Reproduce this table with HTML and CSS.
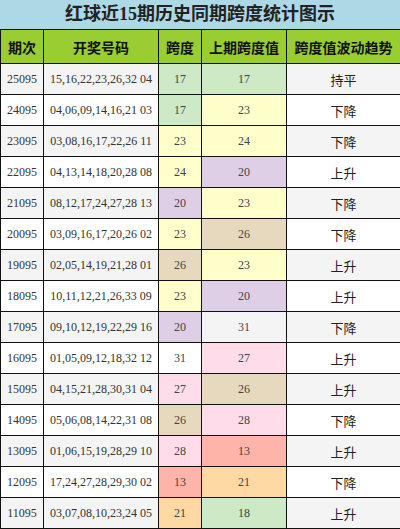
FILE: index.html
```html
<!DOCTYPE html>
<html lang="zh-CN">

<head>
    <meta charset="UTF-8">
    <meta name="viewport" content="width=device-width, initial-scale=1.0">
    <title>红球近15期历史同期跨度统计图示</title>
    <link rel="stylesheet" href="styles.css">
</head>

<body>
    <div class="chart">
        <div class="chart-title">红球近15期历史同期跨度统计图示</div>
        <table class="span-table">
            <colgroup>
                <col class="col-issue">
                <col class="col-nums">
                <col class="col-span">
                <col class="col-prev">
                <col class="col-trend">
            </colgroup>
            <thead>
                <tr>
                    <th>期次</th>
                    <th>开奖号码</th>
                    <th>跨度</th>
                    <th>上期跨度值</th>
                    <th>跨度值波动趋势</th>
                </tr>
            </thead>
            <tbody id="rows">
                <tr><td>25095</td><td>15,16,22,23,26,32 04</td><td class="num c-green">17</td><td class="num c-green">17</td><td class="trend">持平</td></tr>
                <tr><td>24095</td><td>04,06,09,14,16,21 03</td><td class="num c-green">17</td><td class="num c-yellow">23</td><td class="trend">下降</td></tr>
                <tr><td>23095</td><td>03,08,16,17,22,26 11</td><td class="num c-yellow">23</td><td class="num c-yellow">24</td><td class="trend">下降</td></tr>
                <tr><td>22095</td><td>04,13,14,18,20,28 08</td><td class="num c-yellow">24</td><td class="num c-purple">20</td><td class="trend">上升</td></tr>
                <tr><td>21095</td><td>08,12,17,24,27,28 13</td><td class="num c-purple">20</td><td class="num c-yellow">23</td><td class="trend">下降</td></tr>
                <tr><td>20095</td><td>03,09,16,17,20,26 02</td><td class="num c-yellow">23</td><td class="num c-tan">26</td><td class="trend">下降</td></tr>
                <tr><td>19095</td><td>02,05,14,19,21,28 01</td><td class="num c-tan">26</td><td class="num c-yellow">23</td><td class="trend">上升</td></tr>
                <tr><td>18095</td><td>10,11,12,21,26,33 09</td><td class="num c-yellow">23</td><td class="num c-purple">20</td><td class="trend">上升</td></tr>
                <tr><td>17095</td><td>09,10,12,19,22,29 16</td><td class="num c-purple">20</td><td class="num">31</td><td class="trend">下降</td></tr>
                <tr><td>16095</td><td>01,05,09,12,18,32 12</td><td class="num">31</td><td class="num c-pink">27</td><td class="trend">上升</td></tr>
                <tr><td>15095</td><td>04,15,21,28,30,31 04</td><td class="num c-pink">27</td><td class="num c-tan">26</td><td class="trend">上升</td></tr>
                <tr><td>14095</td><td>05,06,08,14,22,31 08</td><td class="num c-tan">26</td><td class="num c-pink">28</td><td class="trend">下降</td></tr>
                <tr><td>13095</td><td>01,06,15,19,28,29 10</td><td class="num c-pink">28</td><td class="num c-red">13</td><td class="trend">上升</td></tr>
                <tr><td>12095</td><td>17,24,27,28,29,30 02</td><td class="num c-red">13</td><td class="num c-orange">21</td><td class="trend">下降</td></tr>
                <tr><td>11095</td><td>03,07,08,10,23,24 05</td><td class="num c-orange">21</td><td class="num c-green">18</td><td class="trend">上升</td></tr>
            </tbody>
        </table>
    </div>
</body>

</html>
```

FILE: styles.css
```css
* {
    box-sizing: border-box;
}

body {
    margin: 0;
    background: #fff;
    font-family: "Liberation Serif", "Noto Sans CJK SC", serif;
    color: #222;
}

.chart {
    width: 400px;
}

/* 标题 */
.chart-title {
    height: 29px;
    line-height: 29px;
    background: #add8e6;
    text-align: center;
    font-size: 18px;
    font-weight: bold;
    color: #222;
}

/* 表格 */
.span-table {
    width: 400px;
    border-collapse: collapse;
    table-layout: fixed;
}

.col-issue { width: 43px; }
.col-nums { width: 115px; }
.col-span { width: 43px; }
.col-prev { width: 85px; }
.col-trend { width: 114px; }

.span-table th,
.span-table td {
    border: 1px solid #111;
    padding: 0;
    text-align: center;
    white-space: nowrap;
}

.span-table th {
    height: 34px;
    background: #9acd32;
    font-size: 14px;
    font-weight: bold;
    color: #111;
}

.span-table td {
    height: 31px;
    font-size: 12px;
    color: #333;
}

.span-table tbody tr:nth-child(odd) {
    background: #f4f4f4;
}

.span-table tbody tr:nth-child(even) {
    background: #fff;
}

.span-table td.num {
    color: #444;
}

.span-table td.trend {
    font-family: "Noto Sans CJK SC", sans-serif;
    font-size: 13px;
    color: #222;
}

/* 跨度颜色 */
.c-green { background: #cde9c6; }
.c-yellow { background: #ffffcc; }
.c-purple { background: #dfcfe6; }
.c-tan { background: #e6d9be; }
.c-pink { background: #ffdcea; }
.c-red { background: #ffb4a9; }
.c-orange { background: #ffd9a3; }
```
